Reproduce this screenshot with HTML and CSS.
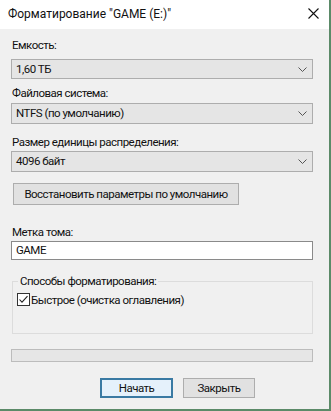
FILE: index.html
```html
<!DOCTYPE html>
<html lang="ru">
<head>
<meta charset="utf-8">
<link rel="stylesheet" href="styles.css">
</head>
<body>
<div class="window">
  <div class="titlebar">
    <span class="title">Форматирование "GAME (E:)"</span>
    <svg class="close" width="11" height="11" viewBox="0 0 11 11"><path d="M0.5 0.5L10.5 10.5M10.5 0.5L0.5 10.5" stroke="#111" stroke-width="1.1" fill="none"/></svg>
  </div>
  <div class="content">
    <div class="label l1">Емкость:</div>
    <div class="combo c1"><span>1,60 ТБ</span><svg class="chev" width="9" height="5" viewBox="0 0 9 5"><path d="M0.5 0.5L4.5 4.5L8.5 0.5" stroke="#555" fill="none"/></svg></div>
    <div class="label l2">Файловая система:</div>
    <div class="combo c2"><span>NTFS (по умолчанию)</span><svg class="chev" width="9" height="5" viewBox="0 0 9 5"><path d="M0.5 0.5L4.5 4.5L8.5 0.5" stroke="#555" fill="none"/></svg></div>
    <div class="label l3">Размер единицы распределения:</div>
    <div class="combo c3"><span>4096 байт</span><svg class="chev" width="9" height="5" viewBox="0 0 9 5"><path d="M0.5 0.5L4.5 4.5L8.5 0.5" stroke="#555" fill="none"/></svg></div>
    <div class="btn reset">Восстановить параметры по умолчанию</div>
    <div class="label l4">Метка тома:</div>
    <div class="input">GAME</div>
    <fieldset class="group">
      <legend>Способы форматирования:</legend>
      <div class="check-row">
        <svg class="checkbox" width="13" height="13" viewBox="0 0 13 13"><rect x="0.5" y="0.5" width="12" height="12" fill="#fff" stroke="#333"/><path d="M2.5 6.5L5 9.2L10.5 3.2" stroke="#222" stroke-width="1.1" fill="none"/></svg>
        <span>Быстрое (очистка оглавления)</span>
      </div>
    </fieldset>
    <div class="progress"></div>
    <div class="actions">
      <div class="btn default">Начать</div>
      <div class="btn close-btn">Закрыть</div>
    </div>
  </div>
</div>
</body>
</html>
```

FILE: styles.css
```css
* { box-sizing: border-box; }
html, body {
  margin: 0;
  padding: 0;
  background: #f0f0f0;
}
body {
  font-family: Roboto, "Noto Sans", sans-serif;
  font-size: 11.5px;
  letter-spacing: -0.5px;
  color: #111;
}
.window {
  width: 331px;
  height: 411px;
  background: #f0f0f0;
  border-right: 2px solid #5b8a68;
  border-bottom: 2px solid #5b8a68;
  display: flex;
  flex-direction: column;
}
.titlebar {
  height: 29px;
  background: #fff;
  display: flex;
  align-items: center;
  justify-content: space-between;
  padding: 0 10px 0 8px;
  flex: none;
}
.title {
  font-size: 12px;
  letter-spacing: 0;
  line-height: 29px;
  white-space: nowrap;
}
.close {
  display: block;
  margin-top: -2px;
}
.content {
  padding: 9px 16px 0 11px;
  display: flex;
  flex-direction: column;
}
.label {
  line-height: 15px;
  height: 15px;
  padding-left: 1px;
  white-space: nowrap;
}
.l1 { margin-bottom: 6px; }
.l2 { margin-top: 7px; margin-bottom: 2px; }
.l3 { margin-top: 11px; margin-bottom: 1px; }
.l4 { margin-top: 20px; margin-bottom: 1px; }
.combo {
  height: 21px;
  background: #e5e5e5;
  border: 1px solid #adadad;
  display: flex;
  align-items: center;
  justify-content: space-between;
  padding: 0 5px 0 4px;
  line-height: 15px;
  white-space: nowrap;
}
.c1 { height: 20px; }
.chev { display: block; }
.btn {
  background: #e1e1e1;
  border: 1px solid #adadad;
  display: flex;
  align-items: center;
  justify-content: center;
  white-space: nowrap;
  line-height: 15px;
}
.reset {
  margin-top: 11px;
  margin-left: 2px;
  width: 226px;
  height: 22px;
}
.input {
  height: 19px;
  background: #fff;
  border: 1px solid #8a8a8a;
  padding: 0 4px;
  line-height: 17px;
}
.group {
  margin: 14px 0 0 1px;
  padding: 0 4px 0 4px;
  border: 1px solid #dcdcdc;
  height: 60px;
}
.group legend {
  padding: 0 2px;
  margin-left: 1px;
  line-height: 15px;
}
.check-row {
  display: flex;
  align-items: center;
  margin-top: 3px;
  height: 15px;
  white-space: nowrap;
}
.checkbox {
  display: block;
  margin-right: 1px;
  flex: none;
}
.progress {
  margin-top: 15px;
  height: 13px;
  background: #e6e6e6;
  border: 1px solid #bcbcbc;
}
.actions {
  display: flex;
  gap: 10px;
  margin-top: 16px;
  padding-left: 89px;
}
.actions .btn {
  height: 20px;
}
.default {
  width: 73px;
  background: #e5f1fb;
  border: 2px solid #3a7aa3;
}
.close-btn {
  width: 72px;
}
```
